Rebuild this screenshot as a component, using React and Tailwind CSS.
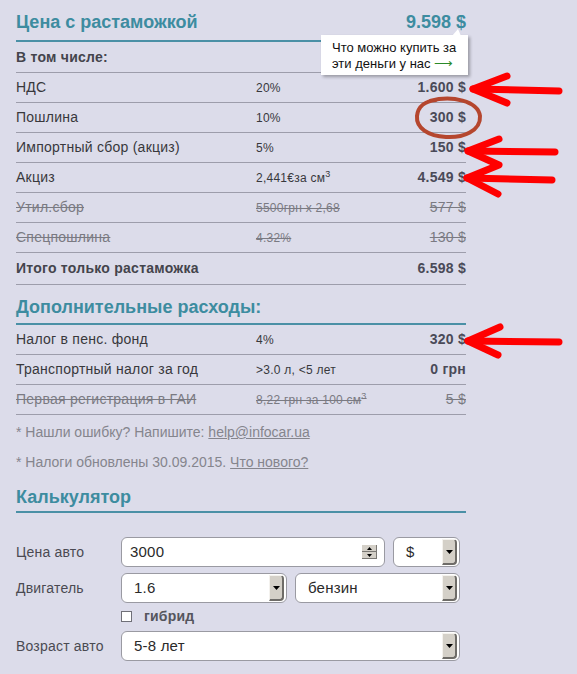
import React from "react";

const F = { fontFamily: '"Liberation Sans", Arial, sans-serif' };

function Row({ label, mid, value, strike, bold, tall }) {
  return (
    <div
      className={`flex items-center border-b border-[#9d9dab] tracking-[0.25px] ${tall ? "h-[32px]" : "h-[30px]"}`}
    >
      <div
        className={`w-[240px] text-[14px] ${
          strike ? "text-[#7a7a82] line-through" : bold ? "font-bold text-[#44444c]" : "text-[#38383c]"
        }`}
      >
        {label}
      </div>
      <div
        className={`flex-1 text-[12px] ${strike ? "text-[#7a7a82] line-through" : "text-[#38383c]"}`}
      >
        {mid}
      </div>
      <div
        className={`text-[14px] text-right ${
          strike ? "text-[#7a7a82] line-through" : "font-bold text-[#4a4a58]"
        }`}
      >
        {value}
      </div>
    </div>
  );
}

function DropBtn() {
  return (
    <div className="h-[26px] w-[15px] mr-[1px] flex items-center justify-center bg-[#d4d0c8] border-t border-l border-t-[#f4f2ee] border-l-[#f4f2ee] border-r-2 border-b-2 border-r-[#6e6c68] border-b-[#6e6c68] rounded-r-[4px]">
      <svg width="7" height="4" viewBox="0 0 7 4">
        <path d="M0 0h7L3.5 4z" fill="#000" />
      </svg>
    </div>
  );
}

function Select({ value, className }) {
  return (
    <div
      className={`h-[30px] flex items-center justify-between bg-white border border-[#9a9aa2] rounded-[6px] pl-[12px] pr-[1px] ${className}`}
    >
      <span className="text-[15px] text-[#2a2a2a]">{value}</span>
      <DropBtn />
    </div>
  );
}

export default function App() {
  return (
    <div className="relative w-full min-h-screen bg-[#dcdcea]" style={F}>
      <div className="w-[450px] ml-[16px]">
        {/* Header */}
        <div className="h-[42px] pt-[5px] flex items-center justify-between border-b-2 border-[#4a90a6]">
          <span className="text-[18px] font-bold text-[#3d8ca0]">Цена с растаможкой</span>
          <span className="text-[18px] font-bold text-[#3d8ca0]">9.598 $</span>
        </div>
        <div className="h-[31px] flex items-center border-b border-[#9d9dab] tracking-[0.25px]">
          <span className="text-[14px] font-bold text-[#44444c]">В том числе:</span>
        </div>
        <Row label="НДС" mid="20%" value="1.600 $" />
        <Row label="Пошлина" mid="10%" value="300 $" />
        <Row label="Импортный сбор (акциз)" mid="5%" value="150 $" />
        <Row
          label="Акциз"
          mid={
            <span>
              2,441€за см<sup className="text-[9px]">3</sup>
            </span>
          }
          value="4.549 $"
        />
        <Row label="Утил.сбор" mid="5500грн x 2,68" value="577 $" strike />
        <Row label="Спецпошлина" mid="4.32%" value="130 $" strike />
        <Row label="Итого только растаможка" value="6.598 $" bold tall />

        {/* Additional */}
        <div className="h-[40px] pt-[6px] flex items-center border-b-2 border-[#4a90a6]">
          <span className="text-[18px] font-bold text-[#3d8ca0]">Дополнительные расходы:</span>
        </div>
        <Row label="Налог в пенс. фонд" mid="4%" value="320 $" />
        <Row label="Транспортный налог за год" mid=">3.0 л, <5 лет" value="0 грн" />
        <Row
          label="Первая регистрация в ГАИ"
          mid={
            <span>
              8,22 грн за 100 см<sup className="text-[9px]">3</sup>
            </span>
          }
          value="5 $"
          strike
        />

        <div className="h-[35px] flex items-center text-[14px] text-[#85858d]">
          * Нашли ошибку? Напишите:&nbsp;<span className="underline">help@infocar.ua</span>
        </div>
        <div className="h-[24px] flex items-center text-[14px] text-[#85858d]">
          * Налоги обновлены 30.09.2015.&nbsp;<span className="underline">Что нового?</span>
        </div>

        {/* Calculator */}
        <div className="h-[39px] pt-[9px] flex items-center border-b-2 border-[#4a90a6]">
          <span className="text-[18px] font-bold text-[#3d8ca0]">Калькулятор</span>
        </div>

        <div className="mt-[24px] flex flex-col tracking-[0.2px]">
          <div className="flex items-center h-[30px]">
            <div className="w-[105px] text-[14px] text-[#4a4a52]">Цена авто</div>
            <div className="w-[264px] h-[30px] flex items-center justify-between bg-white border border-[#9a9aa2] rounded-[6px] pl-[8px] pr-[7px]">
              <span className="text-[15px] text-[#2a2a2a]">3000</span>
              <div className="flex flex-col w-[15px]">
                <div className="h-[7px] bg-[#d4d0c8] border-b border-r border-[#7a7874] flex items-center justify-center">
                  <svg width="5" height="3" viewBox="0 0 5 3">
                    <path d="M2.5 0L5 3H0z" fill="#000" />
                  </svg>
                </div>
                <div className="h-[7px] bg-[#d4d0c8] border-b border-r border-[#7a7874] flex items-center justify-center">
                  <svg width="5" height="3" viewBox="0 0 5 3">
                    <path d="M0 0h5L2.5 3z" fill="#000" />
                  </svg>
                </div>
              </div>
            </div>
            <Select value="$" className="ml-[8px] w-[67px]" />
          </div>

          <div className="flex items-center h-[30px] mt-[6px]">
            <div className="w-[105px] text-[14px] text-[#4a4a52]">Двигатель</div>
            <Select value="1.6" className="w-[166px]" />
            <Select value="бензин" className="ml-[8px] w-[165px]" />
          </div>

          <div className="flex items-center h-[27px] pl-[105px]">
            <div className="w-[11px] h-[11px] bg-white border border-[#707078]" />
            <span className="ml-[12px] text-[14px] font-bold text-[#55555d]">гибрид</span>
          </div>

          <div className="flex items-center h-[30px] mt-[1px]">
            <div className="w-[105px] text-[14px] text-[#4a4a52]">Возраст авто</div>
            <Select value="5-8 лет" className="w-[339px]" />
          </div>
        </div>
      </div>

      {/* Tooltip */}
      <div className="absolute left-[321px] top-[35px] w-[147px] h-[40px] bg-white shadow-[2px_2px_3px_rgba(0,0,0,0.3)] pl-[11px] pt-[5px] text-[13px] leading-[16px] text-[#111]">
        <svg className="absolute -top-[6px] left-[131px]" width="12" height="7" viewBox="0 0 12 7">
          <path d="M0 7L6 0L9 7z" fill="#fff" />
        </svg>
        <div>Что можно купить за</div>
        <div>
          эти деньги у нас <span className="text-[#2a8a2a]">⟶</span>
        </div>
      </div>

      {/* Annotations */}
      <svg className="absolute left-0 top-0 pointer-events-none" width="577" height="674" viewBox="0 0 577 674">
        <path
          d="M430 101 C 452 95, 478 101, 480 116 C 481 131, 463 138, 446 137 C 428 136, 416 128, 417 116 C 418 106, 426 101, 436 100"
          fill="none"
          stroke="#b5462e"
          strokeWidth="4"
          strokeLinecap="round"
        />
        <g fill="none" stroke="#ff0000" strokeWidth="7" strokeLinecap="round" strokeLinejoin="round">
          <path d="M559 91 L473 89" />
          <path d="M507 76 L473 89 L507 103" />
          <path d="M555 152 L468 151" />
          <path d="M499 139 L468 151 L499 165 L467 178 L498 194" />
          <path d="M552 180 L467 178" />
          <path d="M559 342 L468 341" />
          <path d="M500 327 L468 341 L498 355" />
        </g>
      </svg>
    </div>
  );
}
